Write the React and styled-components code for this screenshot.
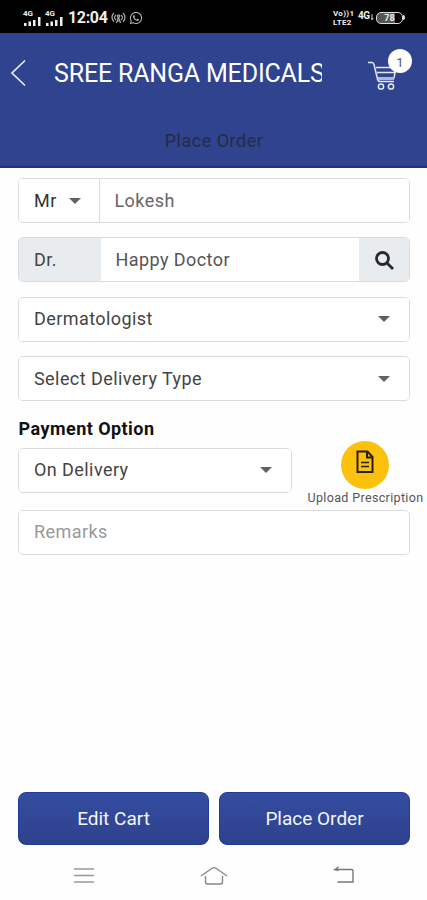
import React from 'react';
import styled, { createGlobalStyle } from 'styled-components';
import { FaWhatsapp } from 'react-icons/fa';

const GlobalStyle = createGlobalStyle`
  *, *::before, *::after { box-sizing: border-box; }
  body { margin: 0; background: #fefefe; font-family: Roboto, sans-serif; }
  button, input { font-family: inherit; }
`;

const Screen = styled.div`
  width: 427px;
  height: 900px;
  display: flex;
  flex-direction: column;
  background: #fefefe;
  overflow: hidden;
`;

const StatusBar = styled.div`
  height: 33px;
  flex: none;
  display: flex;
  align-items: center;
  justify-content: space-between;
  padding: 2px 22px 0 23px;
  background: #000;
  color: #eee;
`;

const StatusGroup = styled.div`
  display: flex;
  align-items: center;
  gap: ${(p) => p.$gap}px;
`;

const Signal = styled.div`
  width: 19px;
  display: flex;
  flex-direction: column;
  font-size: 8px;
  font-weight: 700;
  line-height: 7px;
  svg { display: block; }
`;

const Clock = styled.span`
  width: 39px;
  margin: 0 1px 0 1px;
  font-size: 16px;
  line-height: 18px;
  font-weight: 700;
  letter-spacing: -0.35px;
  white-space: nowrap;
`;

const Volte = styled.div`
  width: 23px;
  display: flex;
  flex-direction: column;
  font-size: 8px;
  font-weight: 700;
  line-height: 9px;
  letter-spacing: 0.3px;
  white-space: nowrap;
`;

const Network = styled.div`
  width: 16px;
  margin-bottom: 4px;
  display: flex;
  align-items: center;
  font-size: 10px;
  font-weight: 700;
  line-height: 10px;
  letter-spacing: -0.5px;
  white-space: nowrap;
  svg { display: block; margin: 3px 0 0 1px; }
`;

const Battery = styled.div`
  display: flex;
  align-items: center;
  span {
    width: 27px;
    height: 12px;
    border: 1.5px solid #ddd;
    border-radius: 5px;
    font-size: 9px;
    line-height: 10px;
    font-weight: 700;
    text-align: center;
    background: linear-gradient(90deg, #555 0 70%, #000 70%);
  }
  &::after {
    content: '';
    width: 2px;
    height: 5px;
    border-radius: 0 2px 2px 0;
    background: #ddd;
  }
`;

const Header = styled.header`
  height: 135px;
  flex: none;
  display: flex;
  flex-direction: column;
  background: #30438f;
  border-bottom: 2px solid #1f347f;
`;

const TitleRow = styled.div`
  height: 80px;
  display: flex;
  align-items: center;
  padding: 0 15px 0 10px;
`;

const BackButton = styled.button`
  display: flex;
  width: 44px;
  padding: 0;
  border: 0;
  background: none;
`;

const Title = styled.h1`
  width: 268px;
  margin: 0;
  padding-top: 1px;
  overflow: hidden;
  white-space: nowrap;
  font-size: 25px;
  line-height: 32px;
  font-weight: 400;
  letter-spacing: -0.18px;
  color: #fff;
`;

const CartButton = styled.div`
  position: relative;
  width: 44px;
  height: 48px;
  margin-left: auto;
  padding-top: 12px;
  svg { display: block; }
`;

const Badge = styled.span`
  position: absolute;
  top: 0;
  right: 0;
  width: 24px;
  height: 24px;
  border-radius: 50%;
  background: #fff;
  color: #555;
  font-size: 13px;
  line-height: 27px;
  text-align: center;
`;

const Subtitle = styled.div`
  padding: 17px 0 0 1px;
  text-align: center;
  font-size: 18px;
  line-height: 22px;
  letter-spacing: 0.5px;
  color: #242b43;
`;

const Form = styled.main`
  flex: 1;
  display: flex;
  flex-direction: column;
  padding: 10px 17.5px 0 18px;
`;

const Field = styled.div`
  height: 45px;
  flex: none;
  display: flex;
  width: ${(p) => p.$width || '100%'};
  margin-bottom: ${(p) => p.$gap ?? 14.4}px;
  border: 1.5px solid #d9dbdd;
  border-radius: 5px;
  overflow: hidden;
  background: #fff;
`;

const Cell = styled.div`
  display: flex;
  align-items: center;
  flex: ${(p) => (p.$width ? 'none' : '1')};
  width: ${(p) => (p.$width ? `${p.$width}px` : 'auto')};
  padding: 0 ${(p) => p.$right ?? 19}px 0 ${(p) => p.$left ?? 15}px;
  justify-content: space-between;
  border-right: ${(p) => (p.$divided ? '1.5px solid #d9dbdd' : '0')};
  background: ${(p) => (p.$shaded ? '#e9ecef' : '#fff')};
  color: ${(p) => p.$color || '#444'};
  font-size: 18px;
  line-height: 22px;
  letter-spacing: 0.43px;
  white-space: nowrap;
`;

const Caret = styled.span`
  border: 5.5px solid transparent;
  border-width: 6px 6px 0;
  border-top-color: #626262;
`;

const SectionLabel = styled.div`
  height: 31px;
  line-height: 24px;
  padding-left: 0.5px;
  font-size: 18px;
  font-weight: 700;
  letter-spacing: 0.45px;
  color: #111;
`;

const PaymentRow = styled.div`
  display: flex;
  height: 62px;
  margin-right: -16px;
  justify-content: space-between;
`;

const Upload = styled.div`
  width: 120px;
  margin-top: -7px;
  display: flex;
  flex-direction: column;
  align-items: center;
  font-size: 12.5px;
  line-height: 17px;
  letter-spacing: 0.35px;
  white-space: nowrap;
  color: #555;
`;

const UploadCircle = styled.div`
  width: 48px;
  height: 48px;
  flex: none;
  display: flex;
  align-items: center;
  justify-content: center;
  padding-bottom: 5px;
  margin-right: 1px;
  border-radius: 50%;
  background: #fcc10c;
`;

const Actions = styled.div`
  flex: none;
  display: flex;
  gap: 10px;
  padding: 0 17px 0 18px;
`;

const ActionButton = styled.button`
  flex: 1;
  height: 53px;
  padding: 0;
  border: 1.5px solid #203b96;
  border-radius: 8px;
  background: linear-gradient(#344da0, #2e418d);
  color: #f4f5fc;
  font-size: 19px;
`;

const SystemNav = styled.nav`
  height: 55px;
  flex: none;
  display: flex;
  justify-content: space-between;
  padding: 20px 72px 0 73px;
`;

const SignalIcon = () => (
  <Signal>
    4G
    <svg width="19" height="9" fill="#eee">
      <path d="M1 6h2.500v3H1zM5.500 4.500H8V9H5.500zM10 3h2.500v6H10zM15 0h2.500v9H15z" />
    </svg>
  </Signal>
);

export default function App() {
  return (
    <Screen>
      <GlobalStyle />
      <StatusBar>
        <StatusGroup $gap={3}>
          <SignalIcon />
          <SignalIcon />
          <Clock>12:04</Clock>
          <svg width="15" height="13" viewBox="0 0 15 13" fill="none" stroke="#aaa" strokeWidth="1.200">
            <path d="M3 2Q-1 6 3 11M5 4Q2 6.500 5 9M12 2Q16 6 12 11M10 4Q13 6.500 10 9M7.500 6L5.500 12M7.500 6l2 6M6 10h3" />
            <circle cx="7.500" cy="5" r="1.200" />
          </svg>
          <FaWhatsapp size={14} color="#b8b8b8" />
        </StatusGroup>
        <StatusGroup $gap={2}>
          <Volte><span>Vo))1</span><span>LTE2</span></Volte>
          <Network>
            4G
            <svg width="3" height="6" viewBox="0 0 3 6" stroke="#ccc"><path d="M1 0v6M0 4l1 1.500L2.500 4" fill="none" /></svg>
          </Network>
          <Battery><span>78</span></Battery>
        </StatusGroup>
      </StatusBar>

      <Header>
        <TitleRow>
          <BackButton aria-label="Back">
            <svg width="17" height="28" viewBox="0 0 17 28" fill="none" stroke="#e8ebfa" strokeWidth="1.700">
              <path d="M15 1.500L2 14l13 12.500" />
            </svg>
          </BackButton>
          <Title>SREE RANGA MEDICALS</Title>
          <CartButton>
            <svg width="32" height="32" viewBox="0 0 32 32" fill="none" stroke="#e4e8fa" strokeWidth="1.500">
              <path d="M0 1.500h4q1.500 0 2 2l3.500 14.500q.5 2.500 2.500 2.500h14" />
              <path d="M8 6.500H28l-2 10.500H11M9 11.500H27" />
              <path d="M10 17.500H26" strokeWidth="3" stroke="#aeb8df" />
              <circle cx="13" cy="25.500" r="2.600" />
              <circle cx="23" cy="25.500" r="2.600" />
            </svg>
            <Badge>1</Badge>
          </CartButton>
        </TitleRow>
        <Subtitle>Place Order</Subtitle>
      </Header>

      <Form>
        <Field>
          <Cell $width={80.5} $right={17.5} $divided $color="#333">Mr<Caret /></Cell>
          <Cell $color="#666">Lokesh</Cell>
        </Field>
        <Field>
          <Cell $width={81.5} $shaded>Dr.</Cell>
          <Cell $color="#555">Happy Doctor</Cell>
          <Cell $width={49.5} $left={15} $right={14} $shaded>
            <svg width="20" height="20" viewBox="0 0 20 20" fill="none" stroke="#252b33" strokeWidth="2.800">
              <circle cx="8.500" cy="8.500" r="6" />
              <path d="M13 13l6 6" />
            </svg>
          </Cell>
        </Field>
        <Field>
          <Cell>Dermatologist<Caret /></Cell>
        </Field>
        <Field $gap={15.5}>
          <Cell>Select Delivery Type<Caret /></Cell>
        </Field>
        <SectionLabel>Payment Option</SectionLabel>
        <PaymentRow>
          <Field $width="274px">
            <Cell>On Delivery<Caret /></Cell>
          </Field>
          <Upload>
            <UploadCircle>
              <svg width="18" height="24" viewBox="0 0 18 24" fill="none" stroke="#29200a" strokeWidth="2">
                <path d="M1.500 1.500h10l5 5.500v15h-15zM11 1.500V7.500h5.500" />
                <path d="M5 12.500h8M5 16.500h8" strokeWidth="1.700" />
              </svg>
            </UploadCircle>
            Upload Prescription
          </Upload>
        </PaymentRow>
        <Field>
          <Cell $color="#999">Remarks</Cell>
        </Field>
      </Form>

      <Actions>
        <ActionButton>Edit Cart</ActionButton>
        <ActionButton>Place Order</ActionButton>
      </Actions>
      <SystemNav>
        <svg width="22" height="22" viewBox="0 0 22 22" stroke="#999" strokeWidth="1.600">
          <path d="M1 4h20M1 10.500h20M1 17h20" />
        </svg>
        <svg width="28" height="22" viewBox="0 0 28 22" fill="none" stroke="#888" strokeWidth="1.400">
          <path d="M1 11L12 3.300q2-1.300 4 0L27 11M5.500 11v6q0 2 2 2h13q2 0 2-2v-6" />
        </svg>
        <svg width="22" height="22" viewBox="0 0 22 22" fill="none" stroke="#777" strokeWidth="1.400">
          <path d="M5.500 2L2 4.500h16.500q1.500 0 1.500 1.500v11H4.500M2 4.500L5.500 5.500" />
        </svg>
      </SystemNav>
    </Screen>
  );
}
